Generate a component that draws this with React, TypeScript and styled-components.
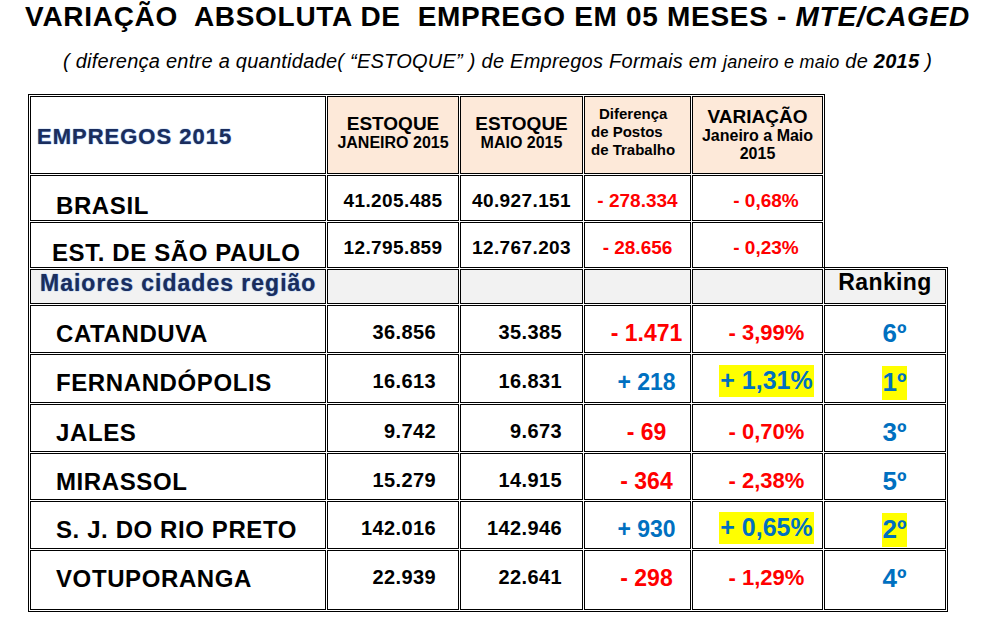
import React from 'react';
import styled, { createGlobalStyle, css } from 'styled-components';

const GlobalStyle = createGlobalStyle`
  body {
    margin: 0;
    background: #fff;
    color: #000;
    font-family: "Liberation Sans", Arial, sans-serif;
  }
`;

const Page = styled.div`
  width: 995px;
  padding-top: 1px;
`;

const Title = styled.h1`
  margin: 0;
  font-size: 28px;
  line-height: 32px;
  font-weight: bold;
  text-align: center;
  white-space: pre;
  letter-spacing: 0.7px;
`;

const Subtitle = styled.p`
  margin: 17px 0 0;
  font-size: 20px;
  line-height: 22px;
  font-style: italic;
  text-align: center;
  white-space: pre;
  letter-spacing: 0.25px;
`;

const Smaller = styled.span`
  font-size: 18px;
`;

const Sheet = styled.div`
  margin: 21px 0 0 28px;
  width: 920px;
`;

const Block = styled.table<{ $part: 'top' | 'bottom' }>`
  box-sizing: border-box;
  border: 1px solid #000;
  border-spacing: 1px;
  table-layout: fixed;
  ${p =>
    p.$part === 'top'
      ? css`
          width: 797px;
          border-bottom: none;
        `
      : css`
          width: 920px;
          border-top: none;
          margin-top: -1px;
        `}
`;

const Row = styled.tr<{ $h: number }>`
  & > td {
    height: ${p => p.$h}px;
  }
`;

type Align = 'left' | 'center' | 'right';

const Cell = styled.td<{
  $w?: number;
  $bg?: string;
  $align?: Align;
  $pt?: number;
  $pl?: number;
  $pr?: number;
}>`
  box-sizing: border-box;
  border: 1px solid #000;
  ${p => (p.$w ? `width: ${p.$w}px;` : '')}
  background: ${p => p.$bg ?? '#fff'};
  text-align: ${p => p.$align ?? 'center'};
  vertical-align: top;
  padding: ${p => p.$pt ?? 0}px ${p => p.$pr ?? 0}px 0 ${p => p.$pl ?? 0}px;
  white-space: nowrap;
  font-weight: bold;
`;

// the ranking column sticks out of the upper block, so it carries its own top edge
const RankHead = styled(Cell)`
  position: relative;
  &::before {
    content: '';
    position: absolute;
    left: -2px;
    right: -3px;
    top: -3px;
    height: 1px;
    background: #000;
  }
`;

const Banner = styled.div<{ $size: number }>`
  font-size: ${p => p.$size}px;
  line-height: 26px;
  letter-spacing: 1px;
  color: #1b2d5c;
  text-shadow: 0 0 1px #6f9fe0, 0 0 1px #6f9fe0;
`;

const HeadBig = styled.div`
  font-size: 19px;
  line-height: 20px;
`;

const HeadSmall = styled.div`
  font-size: 16px;
  line-height: 18px;
`;

const HeadNote = styled.div`
  font-size: 15px;
  line-height: 18px;
  text-align: left;
  padding-left: 6px;
  & > span {
    display: block;
  }
  & > span:first-child {
    padding-left: 8px;
  }
`;

const Place = styled.div`
  font-size: 24px;
  line-height: 28px;
  letter-spacing: 0.6px;
`;

const Stock = styled.div<{ $size: number }>`
  font-size: ${p => p.$size}px;
  line-height: 24px;
  letter-spacing: 0.4px;
`;

const Change = styled.div<{ $up: boolean; $size: number }>`
  font-size: ${p => p.$size}px;
  line-height: 26px;
  color: ${p => (p.$up ? '#0070c0' : '#ff0000')};
`;

const Rank = styled.div`
  font-size: 26px;
  line-height: 30px;
  color: #0070c0;
`;

const Mark = styled.span<{ $on: boolean }>`
  ${p =>
    p.$on &&
    css`
      background: #ffff00;
      padding: 1px 1px 3px;
    `}
`;

const PEACH = '#fde9d9';
const GREY = '#f2f2f2';

const cities = [
  { name: 'CATANDUVA', jan: '36.856', mai: '35.385', diff: '- 1.471', pct: '- 3,99%', rank: '6º', up: false, h: 48 },
  { name: 'FERNANDÓPOLIS', jan: '16.613', mai: '16.831', diff: '+ 218', pct: '+ 1,31%', rank: '1º', up: true, h: 49 },
  { name: 'JALES', jan: '9.742', mai: '9.673', diff: '- 69', pct: '- 0,70%', rank: '3º', up: false, h: 48 },
  { name: 'MIRASSOL', jan: '15.279', mai: '14.915', diff: '- 364', pct: '- 2,38%', rank: '5º', up: false, h: 47 },
  { name: 'S. J. DO RIO PRETO', jan: '142.016', mai: '142.946', diff: '+ 930', pct: '+ 0,65%', rank: '2º', up: true, h: 48 },
  { name: 'VOTUPORANGA', jan: '22.939', mai: '22.641', diff: '- 298', pct: '- 1,29%', rank: '4º', up: false, h: 60 },
];

const totals = [
  { name: 'BRASIL', jan: '41.205.485', mai: '40.927.151', diff: '- 278.334', pct: '- 0,68%', pl: 25 },
  { name: 'EST. DE SÃO PAULO', jan: '12.795.859', mai: '12.767.203', diff: '- 28.656', pct: '- 0,23%', pl: 21 },
];

const App: React.FC = () => {
  return (
    <Page>
      <GlobalStyle />
      <Title>
        {'VARIAÇÃO  ABSOLUTA DE  EMPREGO EM 05 MESES - '}
        <i>MTE/CAGED</i>
      </Title>
      <Subtitle>
        {'( diferença entre a quantidade( “ESTOQUE” ) de Empregos Formais em '}
        <Smaller>janeiro e maio</Smaller>
        {' de '}
        <b>2015</b>
        {' )'}
      </Subtitle>

      <Sheet>
        <Block $part="top">
          <tbody>
            <Row $h={78}>
              <Cell $w={296} $align="left" $pl={6} $pt={27}>
                <Banner $size={22}>EMPREGOS 2015</Banner>
              </Cell>
              <Cell $w={132} $bg={PEACH} $pt={17}>
                <HeadBig>ESTOQUE</HeadBig>
                <HeadSmall>JANEIRO 2015</HeadSmall>
              </Cell>
              <Cell $w={123} $bg={PEACH} $pt={17}>
                <HeadBig>ESTOQUE</HeadBig>
                <HeadSmall>MAIO 2015</HeadSmall>
              </Cell>
              <Cell $w={107} $bg={PEACH} $pt={8}>
                <HeadNote>
                  <span>Diferença</span>
                  <span>de Postos</span>
                  <span>de Trabalho</span>
                </HeadNote>
              </Cell>
              <Cell $w={131} $bg={PEACH} $pt={10}>
                <HeadBig>VARIAÇÃO</HeadBig>
                <HeadSmall>Janeiro a Maio</HeadSmall>
                <HeadSmall>2015</HeadSmall>
              </Cell>
            </Row>
            {totals.map(t => (
              <Row $h={46} key={t.name}>
                <Cell $align="left" $pl={t.pl} $pt={16}>
                  <Place>{t.name}</Place>
                </Cell>
                <Cell $pt={13}>
                  <Stock $size={19}>{t.jan}</Stock>
                </Cell>
                <Cell $pt={13}>
                  <Stock $size={19}>{t.mai}</Stock>
                </Cell>
                <Cell $pt={12}>
                  <Change $up={false} $size={19}>{t.diff}</Change>
                </Cell>
                <Cell $pt={12} $pl={17}>
                  <Change $up={false} $size={19}>{t.pct}</Change>
                </Cell>
              </Row>
            ))}
          </tbody>
        </Block>

        <Block $part="bottom">
          <tbody>
            <Row $h={35}>
              <Cell $w={296} $bg={GREY} $align="left" $pl={9}>
                <Banner $size={23}>Maiores cidades região</Banner>
              </Cell>
              <Cell $w={132} $bg={GREY} />
              <Cell $w={123} $bg={GREY} />
              <Cell $w={107} $bg={GREY} />
              <Cell $w={131} $bg={GREY} />
              <RankHead $w={122} $bg={GREY} $pt={0}>
                <Stock $size={23}>Ranking</Stock>
              </RankHead>
            </Row>
            {cities.map(c => (
              <Row $h={c.h} key={c.name}>
                <Cell $align="left" $pl={25} $pt={14}>
                  <Place>{c.name}</Place>
                </Cell>
                <Cell $align="right" $pr={22} $pt={14}>
                  <Stock $size={20}>{c.jan}</Stock>
                </Cell>
                <Cell $align="right" $pr={20} $pt={14}>
                  <Stock $size={20}>{c.mai}</Stock>
                </Cell>
                <Cell $pl={18} $pt={14}>
                  <Change $up={c.up} $size={23}>{c.diff}</Change>
                </Cell>
                <Cell $pl={18} $pt={c.up ? 12 : 14}>
                  <Change $up={c.up} $size={c.up ? 25 : 22}>
                    <Mark $on={c.up}>{c.pct}</Mark>
                  </Change>
                </Cell>
                <Cell $pl={19} $pt={12}>
                  <Rank>
                    <Mark $on={c.up}>{c.rank}</Mark>
                  </Rank>
                </Cell>
              </Row>
            ))}
          </tbody>
        </Block>
      </Sheet>
    </Page>
  );
};

export default App;
